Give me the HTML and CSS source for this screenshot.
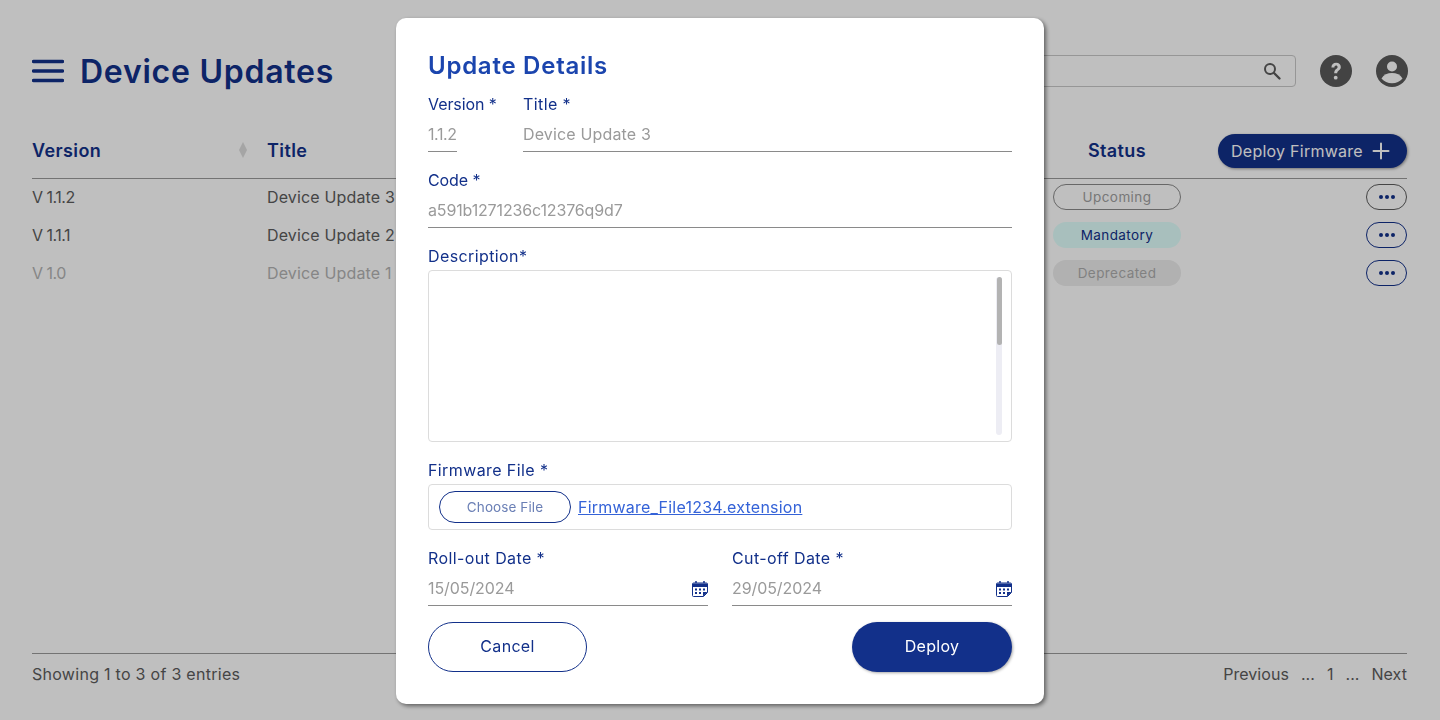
FILE: index.html
```html
<!DOCTYPE html>
<html lang="en">
<head>
<meta charset="utf-8">
<title>Device Updates</title>
<link rel="stylesheet" href="styles.css">
</head>
<body>
<main class="page">
  <header class="topbar">
    <svg class="menu" width="32" height="24" viewBox="0 0 32 24"><path d="M1.5 2.5h29M1.5 12h29M1.5 21.5h29" fill="none" stroke="#12308a" stroke-width="3.4" stroke-linecap="round"/></svg>
    <h1 class="page-title">Device Updates</h1>
    <div class="search">
      <svg width="20" height="20" viewBox="0 0 20 20"><circle cx="8" cy="8" r="5" fill="none" stroke="#5c5c5c" stroke-width="2"/><path d="M12 12l5.5 5.5" stroke="#5c5c5c" stroke-width="2.4" stroke-linecap="round"/></svg>
    </div>
    <svg class="round-icon" width="32" height="32" viewBox="0 0 32 32"><circle cx="16" cy="16" r="16" fill="#5a5a5a"/><path d="M11.4 12.6c0-3 2-4.8 4.8-4.8s4.6 1.700 4.600 4.100c0 3.400-3.600 3.500-3.600 6.300h-3c0-4.200 3.400-4.200 3.400-6.100 0-1-.6-1.600-1.500-1.600-1.100 0-1.700.8-1.700 2.100z" fill="#fff"/><circle cx="15.700" cy="22.700" r="1.900" fill="#fff"/></svg>
    <svg class="round-icon" width="32" height="32" viewBox="0 0 32 32"><circle cx="16" cy="16" r="16" fill="#5a5a5a"/><circle cx="16" cy="11.500" r="5" fill="#fff"/><path d="M5.500 23.500c2-3.700 6-5.500 10.500-5.500s8.500 1.800 10.500 5.500c-2.500 3-6.300 4.700-10.500 4.700s-8-1.700-10.500-4.700z" fill="#fff"/></svg>
  </header>

  <section class="table">
    <div class="row head">
      <div class="cell th sortable">Version<svg width="8" height="16" viewBox="0 0 8 16"><path d="M4 0l4 8-4 8-4-8z" fill="#dcdcdc"/></svg></div>
      <div class="cell th">Title</div>
      <div class="cell th status-head">Status</div>
      <div class="cell actions-head">
        <button class="deploy-firmware">Deploy Firmware<svg width="18" height="18" viewBox="0 0 18 18"><path d="M9 1.500v15M1.500 9h15" stroke="#fff" stroke-width="2" stroke-linecap="round"/></svg></button>
      </div>
    </div>
    <div class="row body">
      <div class="cell ver">V 1.1.2</div>
      <div class="cell">Device Update 3</div>
      <div class="cell"><span class="pill upcoming">Upcoming</span></div>
      <div class="cell end"><button class="more grey"><i></i><i></i><i></i></button></div>
    </div>
    <div class="row body">
      <div class="cell ver">V 1.1.1</div>
      <div class="cell">Device Update 2</div>
      <div class="cell"><span class="pill mandatory">Mandatory</span></div>
      <div class="cell end"><button class="more"><i></i><i></i><i></i></button></div>
    </div>
    <div class="row body muted">
      <div class="cell ver">V 1.0</div>
      <div class="cell">Device Update 1</div>
      <div class="cell"><span class="pill deprecated">Deprecated</span></div>
      <div class="cell end"><button class="more"><i></i><i></i><i></i></button></div>
    </div>
  </section>

  <footer class="foot">
    <span>Showing 1 to 3 of 3 entries</span>
    <nav class="pager"><span>Previous</span><span>...</span><span>1</span><span>...</span><span>Next</span></nav>
  </footer>
</main>

<div class="overlay">
  <form class="modal">
    <h2 class="modal-title">Update Details</h2>
    <div class="field-row">
      <div class="field version"><label class="label short">Version *</label><div class="input ver-input">1.1.2</div></div>
      <div class="field grow"><label class="label">Title *</label><div class="input">Device Update 3</div></div>
    </div>
    <div class="field"><label class="label short">Code *</label><div class="input code">a591b1271236c12376q9d7</div></div>
    <div class="field"><label class="label">Description*</label>
      <div class="textarea"><div class="track"><div class="thumb"></div></div></div>
    </div>
    <div class="field"><label class="label">Firmware File *</label>
      <div class="file-box"><span class="choose">Choose File</span><a class="file-link" href="#">Firmware_File1234.extension</a></div>
    </div>
    <div class="field-row">
      <div class="field grow"><label class="label">Roll-out Date *</label>
        <div class="input date">15/05/2024
          <svg width="16" height="16" viewBox="0 0 16 16"><path d="M4 0v3M12 0v3" stroke="#12308a" stroke-width="1.500"/><path d="M1.500 2h13a1 1 0 0 1 1 1v8.500L11.500 15.500h-10a1 1 0 0 1-1-1V3a1 1 0 0 1 1-1z" fill="#fff" stroke="#12308a" stroke-width="1"/><path d="M1 2.500h14V6H1z" fill="#12308a"/><path d="M3 7.500h2v2H3zM7 7.500h2v2H7zM11 7.500h2v2h-2zM3 11h2v2H3zM7 11h2v2H7z" fill="#12308a"/><path d="M11 15.500V11h4.500z" fill="#12308a"/></svg>
        </div>
      </div>
      <div class="field grow"><label class="label">Cut-off Date *</label>
        <div class="input date">29/05/2024
          <svg width="16" height="16" viewBox="0 0 16 16"><path d="M4 0v3M12 0v3" stroke="#12308a" stroke-width="1.500"/><path d="M1.500 2h13a1 1 0 0 1 1 1v8.500L11.500 15.500h-10a1 1 0 0 1-1-1V3a1 1 0 0 1 1-1z" fill="#fff" stroke="#12308a" stroke-width="1"/><path d="M1 2.500h14V6H1z" fill="#12308a"/><path d="M3 7.500h2v2H3zM7 7.500h2v2H7zM11 7.500h2v2h-2zM3 11h2v2H3zM7 11h2v2H7z" fill="#12308a"/><path d="M11 15.500V11h4.500z" fill="#12308a"/></svg>
        </div>
      </div>
    </div>
    <div class="buttons">
      <button type="button" class="btn cancel">Cancel</button>
      <button type="button" class="btn deploy">Deploy</button>
    </div>
  </form>
</div>
</body>
</html>
```
FILE: styles.css
```css
* { box-sizing: border-box; }
html, body { margin: 0; height: 720px; overflow: hidden; background: #fff; }
body { font-family: Inter, "Noto Sans", sans-serif; font-size: 16px; color: #5c5c5c; letter-spacing: .15px; }
button { font: inherit; letter-spacing: inherit; cursor: pointer; }

.page { height: 720px; display: flex; flex-direction: column; padding: 55px 32px 0; }

.topbar { display: flex; align-items: center; height: 32px; }
.menu { margin-right: 16px; }
.page-title { margin: 0; padding-top: 2px; font-size: 32px; line-height: 32px; font-weight: 600; color: #12308a; letter-spacing: .75px; }
.search { margin-left: auto; width: 560px; height: 32px; border: 1px solid #c8c8c8; border-radius: 4px; display: flex; align-items: center; justify-content: flex-end; padding-right: 13px; }
.round-icon { margin-left: 24px; }

.table { margin-top: 47px; margin-right: 1px; display: flex; flex-direction: column; }
.row { display: grid; grid-template-columns: 235px 786px 128px 1fr; align-items: center; }
.cell { min-width: 0; }
.head { height: 45px; padding-bottom: 10px; margin-bottom: -1px; border-bottom: 1px solid #9a9a9a; }
.th { padding-bottom: 2px; font-size: 18px; font-weight: 600; color: #12308a; letter-spacing: .4px; }
.sortable { display: flex; justify-content: space-between; align-items: center; padding-right: 20px; }
.status-head { text-align: center; }
.actions-head { display: flex; justify-content: flex-end; }
.deploy-firmware { width: 189px; height: 34px; border: 0; border-radius: 17px; background: #12308a; color: #fff; display: flex; align-items: center; justify-content: space-between; padding: 0 17px 0 13px; letter-spacing: .25px; box-shadow: 1px 1px 3px rgba(0,0,0,.4); }
.body { height: 38px; }
.ver { letter-spacing: -.5px; }
.muted { color: #b3b3b3; }
.end { display: flex; justify-content: flex-end; }
.pill { display: block; height: 26px; border-radius: 13px; font-size: 13.5px; line-height: 24px; text-align: center; border: 1px solid transparent; letter-spacing: .42px; }
.upcoming { border-color: #8a8a8a; color: #a0a0a0; }
.mandatory { background: #e1fffc; color: #12308a; }
.deprecated { background: #ececec; color: #adadad; }
.more { width: 41px; height: 26px; border: 1px solid #12308a; border-radius: 13px; background: transparent; display: flex; align-items: center; justify-content: center; gap: 2px; padding: 0; }
.more.grey { border-color: #5c5c5c; }
.more i { width: 4px; height: 4px; border-radius: 50%; background: #12308a; }

.foot { margin-top: 361px; margin-right: 1px; height: 42px; padding-bottom: 2px; border-top: 1px solid #9a9a9a; display: flex; align-items: center; justify-content: space-between; letter-spacing: .28px; }
.pager { display: flex; gap: 12px; letter-spacing: .05px; }

.overlay { position: fixed; inset: 0; background: rgba(0,0,0,.25); display: flex; justify-content: center; align-items: flex-start; padding-top: 18px; }
.modal { width: 648px; height: 686px; padding: 32px; background: #fff; border-radius: 10px; box-shadow: 2px 2px 4px rgba(0,0,0,.5); display: flex; flex-direction: column; }
.modal-title { margin: 0 0 10px; height: 32px; font-size: 24px; line-height: 32px; font-weight: 600; color: #1b45ae; letter-spacing: .75px; }
.field { display: flex; flex-direction: column; margin-bottom: 16px; }
.field-row { display: flex; gap: 24px; }
.grow { flex: 1 1 0; min-width: 0; }
.version { width: 71px; flex: none; }
.label { height: 24px; line-height: 24px; color: #12308a; letter-spacing: .4px; white-space: nowrap; }
.label.short { letter-spacing: -.08px; }
.input { height: 36px; border-bottom: 1px solid #8a8a8a; line-height: 36px; color: #9a9a9a; }
.ver-input { width: 29px; letter-spacing: -.4px; }
.code { letter-spacing: -.15px; }
.date { display: flex; align-items: center; justify-content: space-between; letter-spacing: -.08px; }
.date svg { flex: none; margin-top: 2px; }
.textarea { margin-top: 2px; height: 172px; border: 1px solid #dcdcdc; border-radius: 4px; display: flex; justify-content: flex-end; padding: 6px 9px 6px 0; }
.track { width: 6px; height: 100%; border-radius: 3px; background: #ededf4; }
.thumb { width: 5px; height: 68px; margin: 0 auto; border-radius: 2.5px; background: #b3b3b3; }
.file-box { margin-top: 2px; height: 46px; border: 1px solid #dcdcdc; border-radius: 4px; display: flex; align-items: center; padding-left: 10px; gap: 7px; }
.choose { width: 132px; height: 32px; border: 1px solid #12308a; border-radius: 16px; text-align: center; line-height: 30px; font-size: 13.5px; letter-spacing: .1px; color: #6a7fb5; }
.file-link { color: #3563d8; text-decoration: underline; letter-spacing: .22px; }
.buttons { display: flex; justify-content: space-between; }
.btn { height: 50px; border-radius: 25px; padding: 0 0 2px; letter-spacing: .3px; }
.cancel { width: 159px; background: #fff; border: 1px solid #12308a; color: #12308a; }
.deploy { width: 160px; background: #12308a; border: 0; color: #fff; box-shadow: 1px 1px 3px rgba(0,0,0,.35); }
```
